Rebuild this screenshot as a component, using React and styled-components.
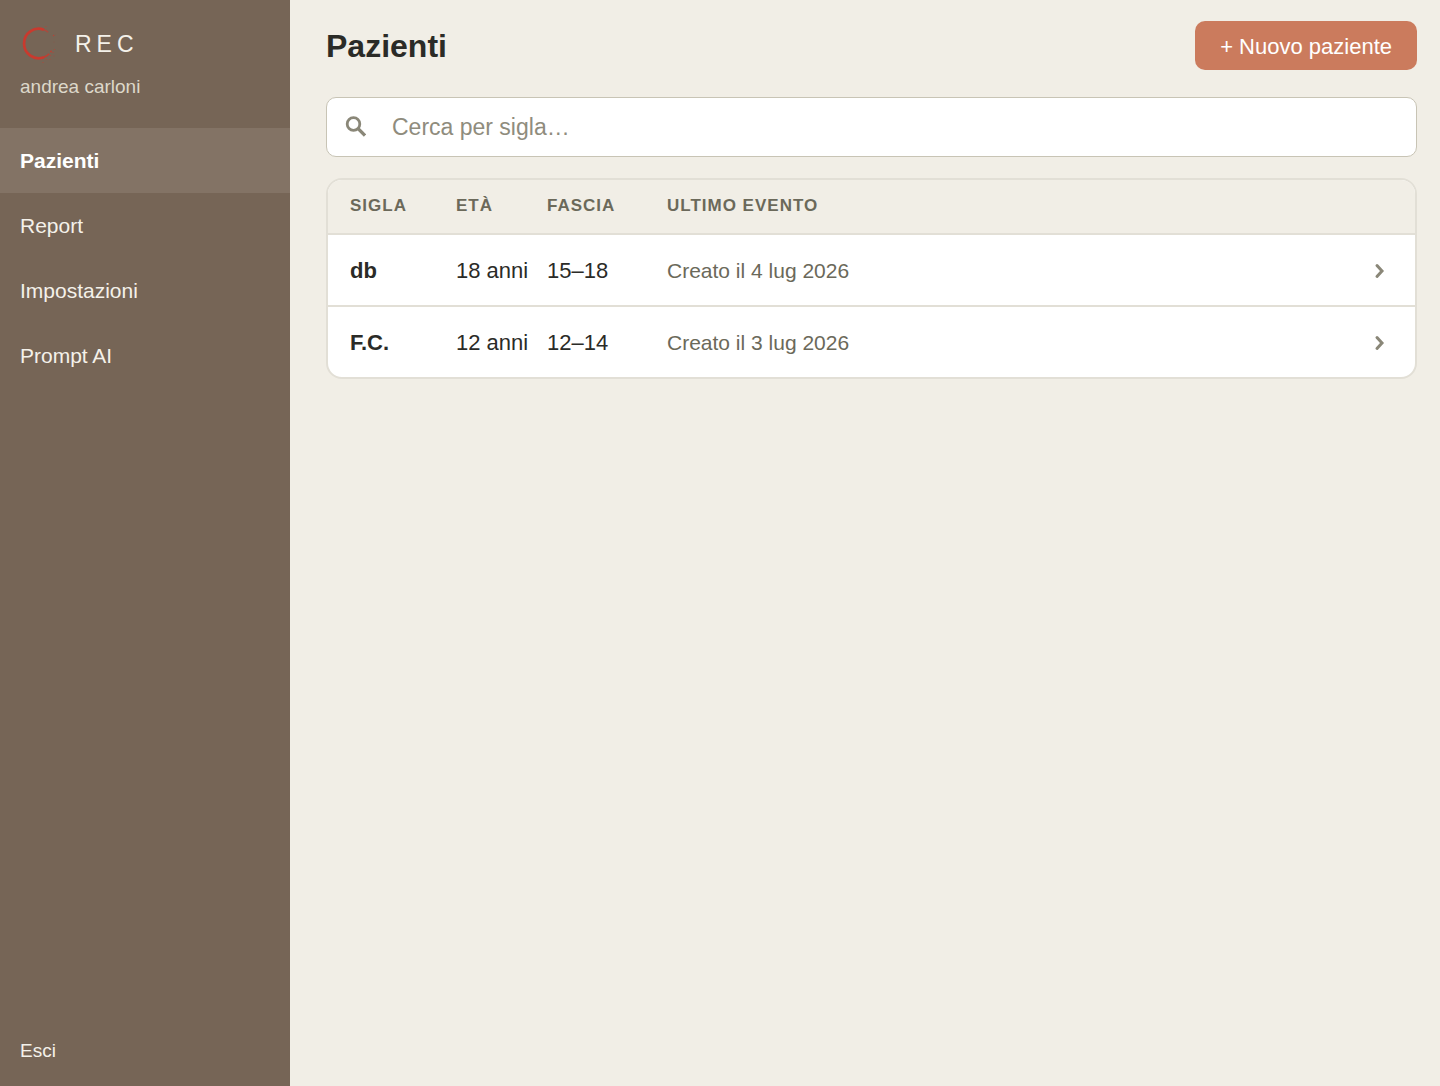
import React, { useState } from "react";
import styled, { createGlobalStyle } from "styled-components";

const GlobalStyle = createGlobalStyle`
  *, *::before, *::after { box-sizing: border-box; }
  body {
    margin: 0;
    background: #f1eee6;
    color: #2b2b27;
    font-family: "Liberation Sans", Arial, sans-serif;
  }
  button, input { font-family: inherit; }
`;

const Layout = styled.div`
  display: flex;
  min-height: 100vh;
`;

const Sidebar = styled.aside`
  flex: 0 0 290px;
  display: flex;
  flex-direction: column;
  background: #766556;
  color: #f4f1ea;
`;

const Brand = styled.div`
  height: 128px;
  padding: 24px 20px 0;
`;

const BrandRow = styled.div`
  display: flex;
  align-items: center;
  gap: 15px;
  height: 40px;
`;

const BrandName = styled.span`
  font-size: 23px;
  line-height: 28px;
  letter-spacing: 5px;
`;

const UserName = styled.div`
  margin-top: 11px;
  font-size: 19px;
  line-height: 24px;
  color: #ddd8ca;
`;

const Nav = styled.nav`
  display: flex;
  flex-direction: column;
`;

const NavLink = styled.a`
  display: flex;
  align-items: center;
  height: 65px;
  padding: 0 20px;
  font-size: 21px;
  line-height: 28px;
  text-decoration: none;
  color: ${(p) => (p.$active ? "#ffffff" : "#f4f1ea")};
  font-weight: ${(p) => (p.$active ? 700 : 400)};
  background: ${(p) => (p.$active ? "#837365" : "transparent")};
`;

const Logout = styled.button`
  margin-top: auto;
  padding: 24px 20px 23px;
  border: 0;
  background: none;
  color: #f4f1ea;
  font-size: 19px;
  line-height: 24px;
  text-align: left;
  cursor: pointer;
`;

const Main = styled.main`
  flex: 1;
  min-width: 0;
  display: flex;
  flex-direction: column;
  padding: 21px 23px 24px 36px;
`;

const Header = styled.header`
  display: flex;
  align-items: center;
  justify-content: space-between;
  margin-bottom: 27px;
`;

const Title = styled.h1`
  margin: 0;
  font-size: 32px;
  line-height: 40px;
  font-weight: 700;
`;

const NewButton = styled.button`
  height: 49px;
  padding: 2px 25px 0;
  border: 0;
  border-radius: 10px;
  background: #cb7b5d;
  color: #ffffff;
  font-size: 22px;
  line-height: 28px;
  cursor: pointer;
`;

const SearchBox = styled.label`
  display: flex;
  align-items: center;
  gap: 26px;
  height: 60px;
  padding: 0 18px;
  margin-bottom: 21px;
  border: 1px solid #c8c4b5;
  border-radius: 10px;
  background: #ffffff;
`;

const SearchInput = styled.input`
  flex: 1;
  min-width: 0;
  padding: 0;
  border: 0;
  outline: 0;
  background: transparent;
  color: #2b2b27;
  font-size: 23px;
  line-height: 28px;
  &::placeholder { color: #8f8c7d; opacity: 1; }
`;

const TableCard = styled.div`
  overflow: hidden;
  border: 2px solid #e2dfd6;
  border-radius: 16px;
  background: #ffffff;
`;

const Table = styled.table`
  width: 100%;
  table-layout: fixed;
  border-collapse: collapse;
`;

const HeadCell = styled.th`
  width: ${(p) => p.$width || "auto"};
  height: 54px;
  padding: 0 0 2px;
  background: #f1eee6;
  color: #6b695a;
  font-size: 17px;
  line-height: 20px;
  font-weight: 700;
  letter-spacing: 1px;
  text-align: left;
  &:first-child { padding-left: 22px; }
`;

const Row = styled.tr`
  height: 72px;
  border-top: 2px solid #e2dfd6;
  cursor: pointer;
  &:last-child { height: 71px; }
`;

const Cell = styled.td`
  padding: 2px 0 0;
  font-size: ${(p) => (p.$muted ? "21px" : "22px")};
  line-height: 28px;
  font-weight: ${(p) => (p.$bold ? 700 : 400)};
  color: ${(p) => (p.$muted ? "#6b695a" : "#2b2b27")};
  white-space: nowrap;
  &:first-child { padding-left: 22px; }
`;

const OpenButton = styled.button`
  display: flex;
  padding: 0;
  border: 0;
  background: none;
  color: #8a8778;
  cursor: pointer;
`;

function Logo() {
  return (
    <svg width="40" height="40" viewBox="0 0 40 40" fill="none" aria-hidden="true">
      <g stroke="#c93a2e">
        <path d="M23.8 5.700A14.700 14.700 0 1 0 23.800 33.300" strokeWidth="2.700" />
        <path d="M23 5.200A14.700 14.700 0 0 1 28.200 8.200" strokeWidth="1.500" opacity=".6" />
        <path d="M23 33.600A14.700 14.700 0 0 0 29.200 29.900" strokeWidth="1.900" opacity=".8" />
      </g>
      <g fill="#c93a2e">
        <circle cx="26" cy="2.500" r=".6" opacity=".7" />
        <circle cx="33.500" cy="11.500" r=".7" opacity=".8" />
        <circle cx="35" cy="11" r=".4" opacity=".6" />
        <circle cx="34" cy="18" r=".4" opacity=".4" />
        <circle cx="31" cy="27.500" r=".9" opacity=".9" />
        <circle cx="33" cy="28.500" r=".6" opacity=".8" />
        <circle cx="34.500" cy="25.500" r=".6" opacity=".6" />
        <circle cx="30.500" cy="31.500" r=".5" opacity=".7" />
        <circle cx="34" cy="32" r=".5" opacity=".5" />
        <circle cx="30" cy="35.500" r=".6" opacity=".6" />
        <circle cx="26.500" cy="35.500" r=".5" opacity=".8" />
        <circle cx="23" cy="38.500" r=".6" opacity=".7" />
      </g>
    </svg>
  );
}

function SearchIcon() {
  return (
    <svg width="21" height="22" viewBox="0 0 21 22" fill="none" stroke="#8a8778" aria-hidden="true">
      <circle cx="8.500" cy="8" r="6.300" strokeWidth="2.800" />
      <path d="M13 12.500L20 19.500" strokeWidth="3.200" />
    </svg>
  );
}

function Chevron() {
  return (
    <svg width="12" height="16" viewBox="0 0 12 16" fill="none" stroke="currentColor" aria-hidden="true">
      <path d="M4 2.500L9 8L4 13.500" strokeWidth="3" strokeLinecap="round" strokeLinejoin="miter" />
    </svg>
  );
}

const navItems = ["Pazienti", "Report", "Impostazioni", "Prompt AI"];

const patients = [
  { code: "db", age: "18 anni", band: "15–18", event: "Creato il 4 lug 2026" },
  { code: "F.C.", age: "12 anni", band: "12–14", event: "Creato il 3 lug 2026" },
];

export default function App() {
  const [query, setQuery] = useState("");
  const visible = patients.filter((p) => p.code.toLowerCase().includes(query.toLowerCase()));

  return (
    <>
      <GlobalStyle />
      <Layout>
        <Sidebar>
          <Brand>
            <BrandRow>
              <Logo />
              <BrandName>REC</BrandName>
            </BrandRow>
            <UserName>andrea carloni</UserName>
          </Brand>
          <Nav>
            {navItems.map((item, i) => (
              <NavLink key={item} href="#" $active={i === 0}>
                {item}
              </NavLink>
            ))}
          </Nav>
          <Logout type="button">Esci</Logout>
        </Sidebar>
        <Main>
          <Header>
            <Title>Pazienti</Title>
            <NewButton type="button">+ Nuovo paziente</NewButton>
          </Header>
          <SearchBox>
            <SearchIcon />
            <SearchInput
              type="text"
              aria-label="Cerca per sigla"
              placeholder="Cerca per sigla…"
              value={query}
              onChange={(e) => setQuery(e.target.value)}
            />
          </SearchBox>
          <TableCard>
            <Table>
              <thead>
                <tr>
                  <HeadCell $width="128px">SIGLA</HeadCell>
                  <HeadCell $width="91px">ETÀ</HeadCell>
                  <HeadCell $width="120px">FASCIA</HeadCell>
                  <HeadCell>ULTIMO EVENTO</HeadCell>
                  <HeadCell as="td" $width="42px" />
                </tr>
              </thead>
              <tbody>
                {visible.map((p) => (
                  <Row key={p.code}>
                    <Cell $bold>{p.code}</Cell>
                    <Cell>{p.age}</Cell>
                    <Cell>{p.band}</Cell>
                    <Cell $muted>{p.event}</Cell>
                    <Cell>
                      <OpenButton type="button" aria-label={`Apri ${p.code}`}>
                        <Chevron />
                      </OpenButton>
                    </Cell>
                  </Row>
                ))}
              </tbody>
            </Table>
          </TableCard>
        </Main>
      </Layout>
    </>
  );
}
